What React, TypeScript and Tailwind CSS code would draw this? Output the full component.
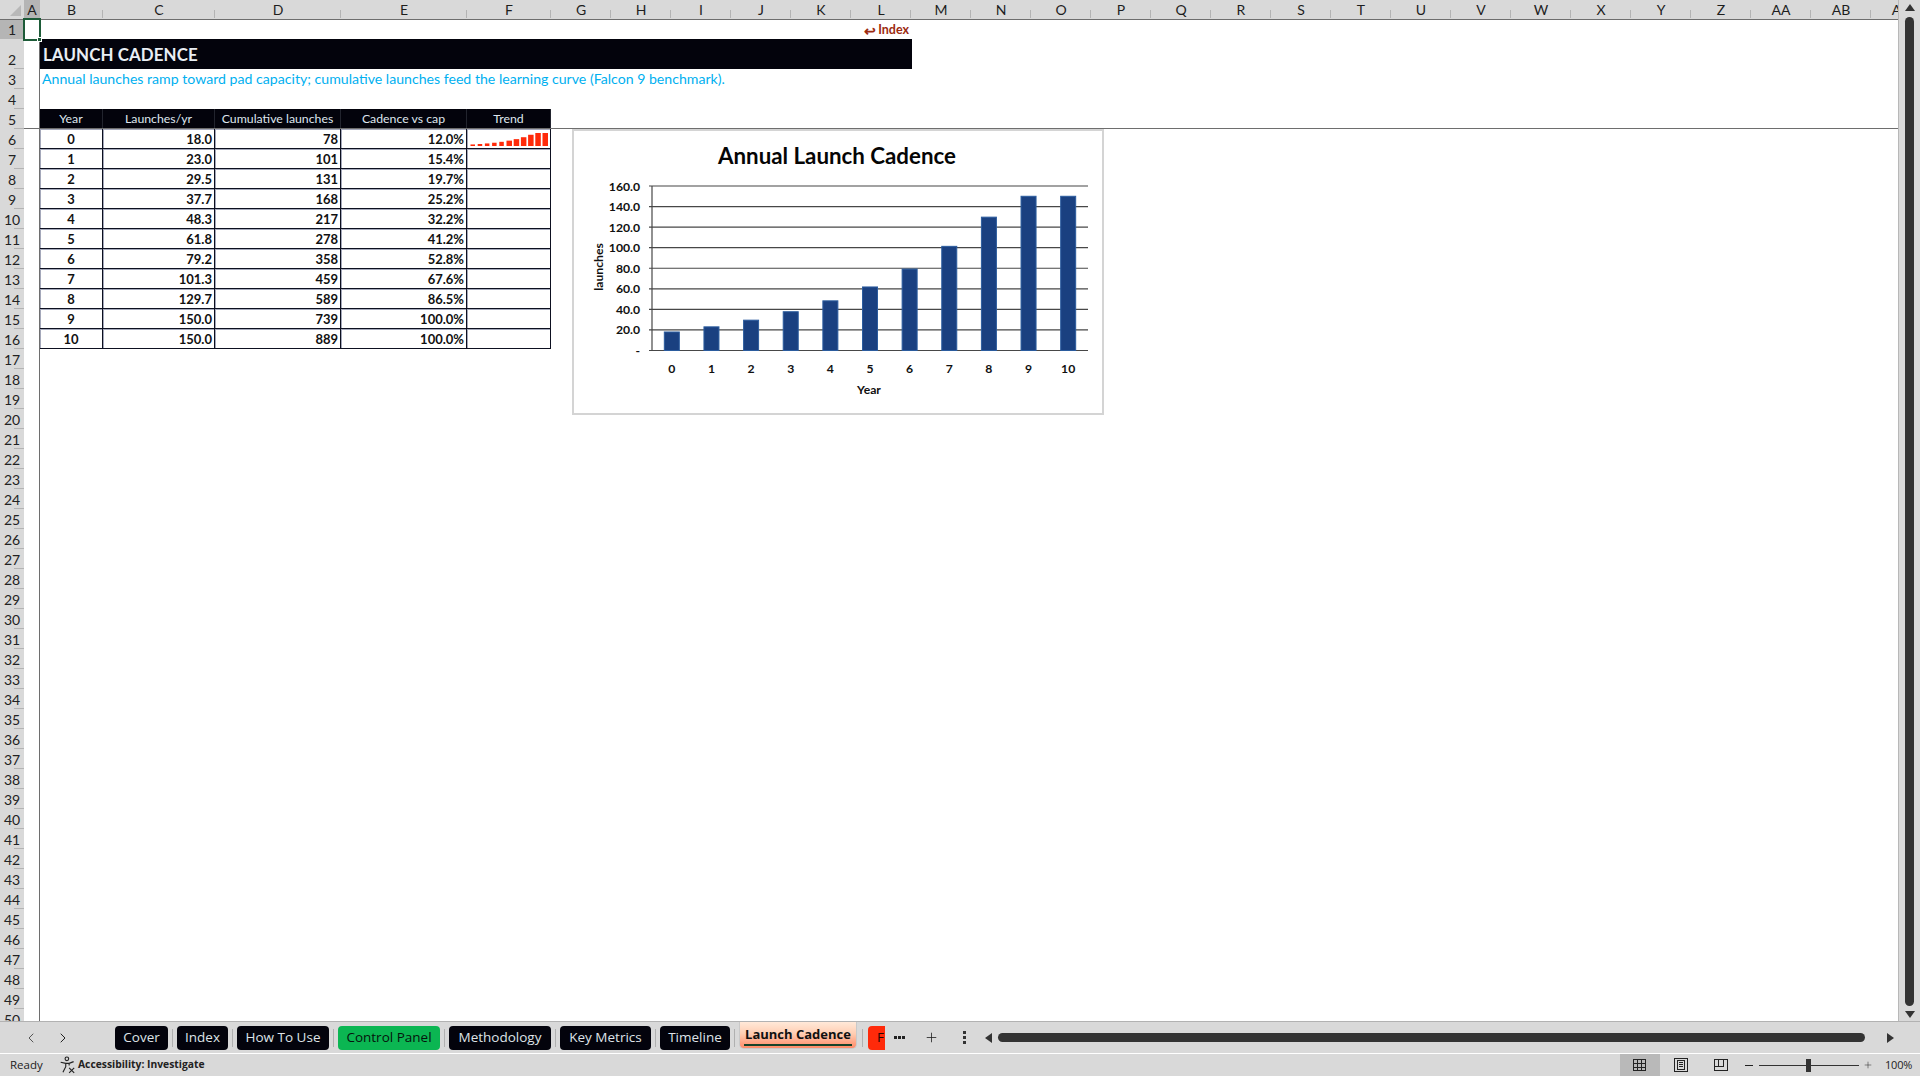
import React from "react";
import { ChevronLeft, ChevronRight, Plus } from "lucide-react";

const F = "font-['Lato','Liberation_Sans',sans-serif]";
const U = "font-['Open_Sans','Noto_Sans',sans-serif]";

const letters = ["G","H","I","J","K","L","M","N","O","P","Q","R","S","T","U","V","W","X","Y","Z","AA","AB","AC"];
const rowHeights: Record<number, string> = { 1: "h-[19px]", 2: "h-[30px]" };
const data = [
  ["0","18.0","78","12.0%"],["1","23.0","101","15.4%"],["2","29.5","131","19.7%"],["3","37.7","168","25.2%"],
  ["4","48.3","217","32.2%"],["5","61.8","278","41.2%"],["6","79.2","358","52.8%"],["7","101.3","459","67.6%"],
  ["8","129.7","589","86.5%"],["9","150.0","739","100.0%"],["10","150.0","889","100.0%"],
];
const vals = [18,23,29.5,37.7,48.3,61.8,79.2,101.3,129.7,150,150];
const tabs = [
  { t: "Cover", w: "w-[53px]", c: "bg-[#03030c] text-[#dfe3e8]" },
  { t: "Index", w: "w-[51px]", c: "bg-[#03030c] text-[#dfe3e8]" },
  { t: "How To Use", w: "w-[92px]", c: "bg-[#03030c] text-[#dfe3e8]" },
  { t: "Control Panel", w: "w-[102px]", c: "bg-[#0bb652] text-[#06130c]" },
  { t: "Methodology", w: "w-[102px]", c: "bg-[#03030c] text-[#dfe3e8]" },
  { t: "Key Metrics", w: "w-[91px]", c: "bg-[#03030c] text-[#dfe3e8]" },
  { t: "Timeline", w: "w-[70px]", c: "bg-[#03030c] text-[#dfe3e8]" },
];

function ColHead({ w, label, active }: { w: string; label: string; active?: boolean }) {
  return (
    <div className={`relative flex shrink-0 items-center justify-center pt-[1px] ${w} ${active ? "bg-[#b5b5b5]" : ""}`}>
      {label}
      <span className="absolute right-0 bottom-[1px] h-[8px] w-px bg-[#b4b4b4]" />
    </div>
  );
}

function Sparkline() {
  return (
    <svg width="83" height="18" viewBox="0 0 83 18" className="block">
      {vals.map((v, i) => {
        const h = Math.max(1, (v / 150) * 13);
        return <rect key={i} x={3.5 + i * 7.2} y={16 - h} width={i < 5 ? 4.5 : 5.5} height={h} fill="#ff2a0a" />;
      })}
    </svg>
  );
}

function Chart() {
  const top = 187, bot = 351.5, left = 652, right = 1088;
  const y = (v: number) => bot - (v / 160) * (bot - top);
  const step = (right - left) / 11;
  return (
    <div className="absolute left-[572px] top-[109px] h-[286px] w-[532px] border-2 border-[#d4d4d4] bg-white">
      <svg width="528" height="282" viewBox="574 132 528 282" className="block">
        {[0,20,40,60,80,100,120,140,160].map((v) => (
          <g key={v}>
            <line x1={left - 3} x2={right} y1={y(v)} y2={y(v)} stroke="#474747" strokeWidth="1.2" />
            <text x={640} y={y(v) + 4.5} textAnchor="end" fontSize="12.2" fontWeight="700" fill="#111" fontFamily="Lato">
              {v === 0 ? "-" : v.toFixed(1)}
            </text>
          </g>
        ))}
        <line x1={left} x2={left} y1={top} y2={bot} stroke="#474747" strokeWidth="1.2" />
        {vals.map((v, i) => {
          const cx = left + step * (i + 0.5);
          return (
            <g key={i}>
              <rect x={cx - 7.5} y={y(v)} width={15} height={bot - y(v)} fill="#1a4080" stroke="#2b5c9e" strokeWidth="1" />
              <text x={cx} y={373.5} textAnchor="middle" fontSize="12.2" fontWeight="700" fill="#111" fontFamily="Lato">{i}</text>
            </g>
          );
        })}
        <text x={869} y={394.5} textAnchor="middle" fontSize="12.2" fontWeight="700" fill="#111" fontFamily="Lato">Year</text>
        <text transform="translate(603 268) rotate(-90)" textAnchor="middle" fontSize="12.2" fontWeight="700" fill="#111" fontFamily="Lato">launches</text>
        <text x={837} y={165} textAnchor="middle" fontSize="22.3" fontWeight="700" fill="#050505" fontFamily="Lato">Annual Launch Cadence</text>
      </svg>
    </div>
  );
}

function Row({ n }: { n: number }) {
  const h = rowHeights[n] ?? "h-[20px]";
  const tableHead = n === 5;
  const d = n >= 6 && n <= 16 ? data[n - 6] : null;
  const cellB = "flex h-full shrink-0 items-center border-r border-b border-r-[#0d1020] border-b-[#0d1020] bg-white pt-[2px] text-[13px] font-bold text-[#111] shadow-[inset_1px_1px_0_#a4a8ba]";
  const headC = "flex h-full shrink-0 items-center justify-center bg-[#03030c] border-r border-r-[#22242e] pt-[1px] text-[12.3px] text-[#dfe6ee]";
  return (
    <div className={`flex shrink-0 ${h}`}>
      <div className={`relative flex w-[24px] shrink-0 items-end justify-center pb-[1px] text-[14px] leading-[17px] ${n === 1 ? "bg-[#b5b5b5]" : "bg-[#d9d9d9]"} text-[#222]`}>
        {n}
        <span className="absolute bottom-0 right-0 h-px w-[10px] bg-[#b4b4b4]" />
      </div>
      <div className={`w-[16px] shrink-0 border-r border-r-[#6e6e6e] ${n === 5 ? "border-b border-b-[#6e6e6e]" : ""}`} />
      <div className={`flex min-w-0 flex-1 ${n === 5 ? "border-b border-b-[#6e6e6e]" : ""}`}>
        {n === 2 && (
          <div className="flex h-full w-[872px] items-center bg-[#03030c] pl-[3px] pt-[1px] text-[16.9px] font-bold tracking-[0.1px] text-[#e9eef4]">
            LAUNCH CADENCE
          </div>
        )}
        {n === 3 && (
          <div className="flex h-full items-center whitespace-nowrap pl-[2px] text-[14.13px] text-[#00b0f0]">
            Annual launches ramp toward pad capacity; cumulative launches feed the learning curve (Falcon 9 benchmark).
          </div>
        )}
        {n === 1 && (
          <div className="flex h-full w-[869px] items-center justify-end pt-[2px] text-[12.5px] font-bold text-[#9c2a10]">
            <span className="mr-[2px] text-[14px] leading-none">↩</span>Index
          </div>
        )}
        {tableHead && (
          <>
            <div className={`${headC} w-[63px]`}>Year</div>
            <div className={`${headC} w-[112px]`}>Launches/yr</div>
            <div className={`${headC} w-[126px]`}>Cumulative launches</div>
            <div className={`${headC} w-[126px]`}>Cadence vs cap</div>
            <div className={`${headC} w-[84px]`}>Trend</div>
          </>
        )}
        {d && (
          <>
            <div className={`${cellB} w-[63px] justify-center`}>{d[0]}</div>
            <div className={`${cellB} w-[112px] justify-end pr-[2px]`}>{d[1]}</div>
            <div className={`${cellB} w-[126px] justify-end pr-[2px]`}>{d[2]}</div>
            <div className={`${cellB} w-[126px] justify-end pr-[2px]`}>{d[3]}</div>
            <div className={`${cellB} w-[84px] !pt-0`}>{n === 6 && <Sparkline />}</div>
          </>
        )}
      </div>
    </div>
  );
}

function ViewIcon({ kind }: { kind: "grid" | "page" | "break" }) {
  return (
    <svg width="16" height="16" viewBox="0 0 16 16" fill="none" stroke="#222" strokeWidth="1" shapeRendering="crispEdges">
      {kind === "grid" && (
        <>
          <rect x="1.5" y="2.5" width="12" height="11" />
          <path d="M5.5 2.5v11M9.5 2.5v11M1.5 6.5h12M1.5 10.5h12" />
        </>
      )}
      {kind === "page" && (
        <>
          <rect x="1.5" y="1.5" width="13" height="13" />
          <rect x="4.5" y="3.5" width="7" height="9" />
          <path d="M6 5.5h4M6 7.5h4M6 9.5h4" />
        </>
      )}
      {kind === "break" && (
        <path d="M1.5 2.5h13v11h-13zM1.5 9.5h9V2.5M5.5 2.5v7" />
      )}
    </svg>
  );
}

export default function App() {
  return (
    <div className={`flex h-[1076px] w-[1920px] flex-col overflow-hidden bg-[#d9d9d9] ${F}`}>
      <div className="flex h-[1022px] shrink-0 border-b border-[#b2b2b2]">
        <div className="flex w-[1898px] shrink-0 flex-col overflow-hidden">
          <div className="flex h-[20px] shrink-0 border-b border-[#6e6e6e] bg-[#d9d9d9] text-[14px] leading-none text-[#1e1e1e]">
            <div className="w-[24px] shrink-0 flex items-end justify-end">
              <div className="mb-[3px] mr-[3px] h-0 w-0 border-b-[11px] border-l-[11px] border-b-[#b8b8b8] border-l-transparent" />
            </div>
            <div className="flex w-[16px] shrink-0 items-center justify-center bg-[#b5b5b5] pt-[1px]">A</div>
            <ColHead w="w-[63px]" label="B" />
            <ColHead w="w-[112px]" label="C" />
            <ColHead w="w-[126px]" label="D" />
            <ColHead w="w-[126px]" label="E" />
            <ColHead w="w-[84px]" label="F" />
            {letters.map((l) => (
              <ColHead key={l} w="w-[60px]" label={l} />
            ))}
          </div>
          <div className="relative min-h-0 flex-1 bg-white">
            {Array.from({ length: 50 }, (_, i) => (
              <Row key={i} n={i + 1} />
            ))}
            <Chart />
            <div className="absolute -top-[2px] left-[23px] h-[23px] w-[18px] border-2 border-[#1d5b38]">
              <span className="absolute -bottom-[3px] -right-[3px] h-[5px] w-[5px] border border-white bg-[#1d5b38]" />
            </div>
          </div>
        </div>
        <div className="flex w-[22px] shrink-0 flex-col items-center border-l border-[#b8b8b8] pt-[4px] pb-[3px]">
          <div className="h-0 w-0 border-x-[5px] border-b-[7px] border-x-transparent border-b-[#333]" />
          <div className="mt-[6px] w-[9px] flex-1 rounded-full bg-[#333]" />
          <div className="mt-[5px] h-0 w-0 border-x-[5px] border-t-[7px] border-x-transparent border-t-[#333]" />
        </div>
      </div>

      <div className={`flex h-[31px] shrink-0 items-center ${U}`}>
        <div className="flex w-[115px] shrink-0 items-center pl-[23px] text-[#555]">
          <ChevronLeft size={16} strokeWidth={1.5} />
          <ChevronRight size={16} strokeWidth={1.5} className="ml-[16px] text-[#222]" />
        </div>
        {tabs.map((t) => (
          <React.Fragment key={t.t}>
            <div className={`flex h-[24px] shrink-0 items-center justify-center rounded-[4px] text-[13.5px] ${t.w} ${t.c}`}>{t.t}</div>
            <span className="mx-[4px] h-[18px] w-px shrink-0 bg-[#b0b0b0]" />
          </React.Fragment>
        ))}
        <div className="-mt-[5px] flex h-[27px] w-[118px] shrink-0 flex-col items-center rounded-b-[5px] border border-t-0 border-[#c9c9c9] bg-[linear-gradient(#ffe9d9,#ffcdb2_45%,#ff8b68)] pb-[2px] pt-[1px] text-[13px] font-bold text-[#101010]">
          <span className="mt-[1px] border-b-2 border-[#17432a] px-[1px] leading-[20px]">Launch Cadence</span>
        </div>
        <span className="mx-[5px] h-[18px] w-px shrink-0 bg-[#b0b0b0]" />
        <div className="flex h-[24px] w-[17px] shrink-0 items-center overflow-hidden rounded-l-[4px] bg-[#ff2a0a] pl-[9px] text-[13.5px] text-[#220503]">Fl</div>
        <div className="ml-[5px] flex w-[19px] shrink-0 justify-center gap-[1px]">
          <span className="h-[3px] w-[3px] bg-[#222]" /><span className="h-[3px] w-[3px] bg-[#222]" /><span className="h-[3px] w-[3px] bg-[#222]" />
        </div>
        <Plus size={15} strokeWidth={1.3} className="ml-[15px] shrink-0 text-[#222]" />
        <div className="ml-[24px] flex w-[3px] shrink-0 flex-col gap-[2px]">
          <span className="h-[3px] w-[3px] bg-[#333]" /><span className="h-[3px] w-[3px] bg-[#333]" /><span className="h-[3px] w-[3px] bg-[#333]" />
        </div>
        <div className="ml-[19px] h-0 w-0 shrink-0 border-y-[5px] border-r-[7px] border-y-transparent border-r-[#333]" />
        <div className="ml-[6px] h-[9px] w-[867px] shrink-0 rounded-full bg-[#333]" />
        <div className="ml-[22px] h-0 w-0 shrink-0 border-y-[5px] border-l-[7px] border-y-transparent border-l-[#333]" />
      </div>

      <div className={`flex h-[23px] shrink-0 items-center border-t border-white text-[11.5px] text-[#222] ${U}`}>
        <span className="ml-[10px] w-[49px] shrink-0">Ready</span>
        <svg width="18" height="18" viewBox="0 0 16 16" fill="none" stroke="#222" strokeWidth="1" className="shrink-0">
          <circle cx="7" cy="2.5" r="1.6" />
          <path d="M1.5 5.5 6 6.5h3l4-1.5M6 6.5v3L3.5 14.5M9 6.5v2" />
          <path d="M9 10.5l4.5 4.5M13.5 10.5 9 15" />
        </svg>
        <span className="ml-[1px] text-[10.3px] font-bold">Accessibility: Investigate</span>
        <div className="ml-auto flex h-full items-center">
          <div className="flex h-full w-[40px] items-center justify-center bg-[#b9b9b9]"><ViewIcon kind="grid" /></div>
          <div className="flex h-full w-[41px] items-center justify-center"><ViewIcon kind="page" /></div>
          <div className="flex h-full w-[39px] items-center justify-center"><ViewIcon kind="break" /></div>
          <span className="ml-[5px] h-px w-[8px] bg-[#222]" />
          <div className="relative ml-[6px] flex h-[13px] w-[100px] items-center">
            <div className="h-px w-full bg-[#333]" />
            <span className="absolute left-[47px] top-0 h-[13px] w-[5px] bg-[#333]" />
          </div>
          <Plus size={10} strokeWidth={1.2} className="ml-[4px]" />
          <span className="ml-[12px] w-[35px] text-[11px] tracking-[-0.2px]">100%</span>
        </div>
      </div>
    </div>
  );
}
